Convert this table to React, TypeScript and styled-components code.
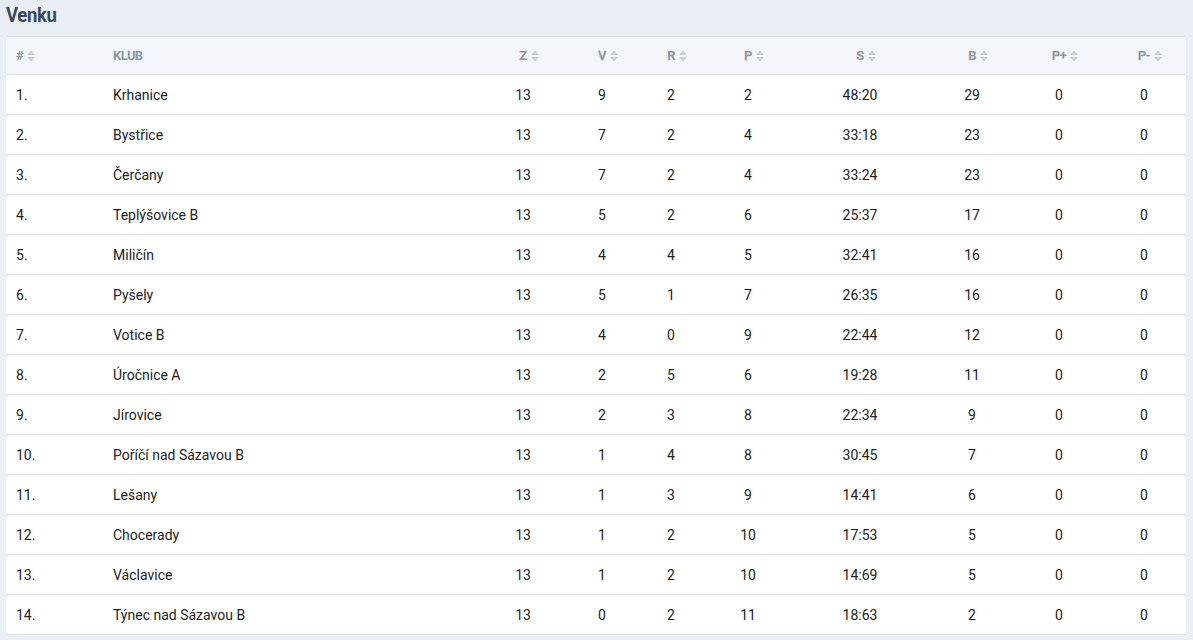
import React from "react";
import styled, { createGlobalStyle } from "styled-components";

const Global = createGlobalStyle`
  html, body { margin: 0; padding: 0; background: #e9eef5; }
  body { font-family: Roboto, "Liberation Sans", Arial, sans-serif; }
`;

const Page = styled.div`
  padding: 0 7px 6px 6px;
  display: flex;
  flex-direction: column;
`;

const TitleBar = styled.div`
  height: 36px;
  padding-top: 2px;
  box-sizing: border-box;
`;

const Title = styled.h2`
  margin: 0;
  display: inline-block;
  transform: scaleX(0.88);
  transform-origin: left center;
  font-family: Roboto, "Liberation Sans", sans-serif;
  font-weight: 700;
  font-size: 21px;
  letter-spacing: -0.4px;
  color: #3a4858;
  line-height: 26px;
`;

const Table = styled.table`
  width: 100%;
  border-collapse: collapse;
  background: #fff;
  table-layout: fixed;
`;

const HeadRow = styled.tr`
  background: #f2f5f9;
  border-top: 1px solid #dde2e8;
  border-bottom: 1px solid #dde2e8;
`;

const Th = styled.th<{ $align?: "left" | "center" }>`
  height: 37px;
  padding: 0 10px;
  text-align: ${(p) => p.$align ?? "center"};
  font-size: 13px;
  font-weight: 700;
  color: #8a96a3;
  letter-spacing: -0.6px;
  white-space: nowrap;
`;

const HeadLabel = styled.span`
  position: relative;
  display: inline-block;
`;

const SortIcon = styled.svg`
  position: absolute;
  left: calc(100% + 4px);
  top: 50%;
  transform: translateY(-50%);
  width: 8px;
  height: 11px;
`;

const Row = styled.tr`
  border-bottom: 1px solid #dde2e8;
`;

const Td = styled.td<{ $align?: "left" | "center" }>`
  height: 39px;
  padding: 0 10px;
  text-align: ${(p) => p.$align ?? "center"};
  font-size: 14px;
  color: #222;
  white-space: nowrap;
`;

const Sort = () => (
  <SortIcon viewBox="0 0 8 11">
    <path d="M4 0 L8 4.5 L0 4.5 Z" fill="#c7ced6" />
    <path d="M0 6.5 L8 6.5 L4 11 Z" fill="#c7ced6" />
  </SortIcon>
);

const columns = [
  { key: "#", w: 97, align: "left" as const },
  { key: "KLUB", w: 377, align: "left" as const },
  { key: "Z", w: 86 },
  { key: "V", w: 72 },
  { key: "R", w: 66 },
  { key: "P", w: 88 },
  { key: "S", w: 136 },
  { key: "B", w: 88 },
  { key: "P+", w: 86 },
  { key: "P-", w: 84 },
];

const rows: [string, number, number, number, number, string, number][] = [
  ["Krhanice", 13, 9, 2, 2, "48:20", 29],
  ["Bystřice", 13, 7, 2, 4, "33:18", 23],
  ["Čerčany", 13, 7, 2, 4, "33:24", 23],
  ["Teplýšovice B", 13, 5, 2, 6, "25:37", 17],
  ["Miličín", 13, 4, 4, 5, "32:41", 16],
  ["Pyšely", 13, 5, 1, 7, "26:35", 16],
  ["Votice B", 13, 4, 0, 9, "22:44", 12],
  ["Úročnice A", 13, 2, 5, 6, "19:28", 11],
  ["Jírovice", 13, 2, 3, 8, "22:34", 9],
  ["Poříčí nad Sázavou B", 13, 1, 4, 8, "30:45", 7],
  ["Lešany", 13, 1, 3, 9, "14:41", 6],
  ["Chocerady", 13, 1, 2, 10, "17:53", 5],
  ["Václavice", 13, 1, 2, 10, "14:69", 5],
  ["Týnec nad Sázavou B", 13, 0, 2, 11, "18:63", 2],
];

export default function App() {
  return (
    <Page>
      <Global />
      <TitleBar>
        <Title>Venku</Title>
      </TitleBar>
      <Table>
        <colgroup>
          {columns.map((c) => (
            <col key={c.key} style={{ width: c.w }} />
          ))}
        </colgroup>
        <thead>
          <HeadRow>
            {columns.map((c) => (
              <Th key={c.key} $align={c.align}>
                <HeadLabel>
                  {c.key}
                  {c.key !== "KLUB" && <Sort />}
                </HeadLabel>
              </Th>
            ))}
          </HeadRow>
        </thead>
        <tbody>
          {rows.map((r, i) => (
            <Row key={i}>
              <Td $align="left">{i + 1}.</Td>
              <Td $align="left">{r[0]}</Td>
              <Td>{r[1]}</Td>
              <Td>{r[2]}</Td>
              <Td>{r[3]}</Td>
              <Td>{r[4]}</Td>
              <Td>{r[5]}</Td>
              <Td>{r[6]}</Td>
              <Td>0</Td>
              <Td>0</Td>
            </Row>
          ))}
        </tbody>
      </Table>
    </Page>
  );
}
